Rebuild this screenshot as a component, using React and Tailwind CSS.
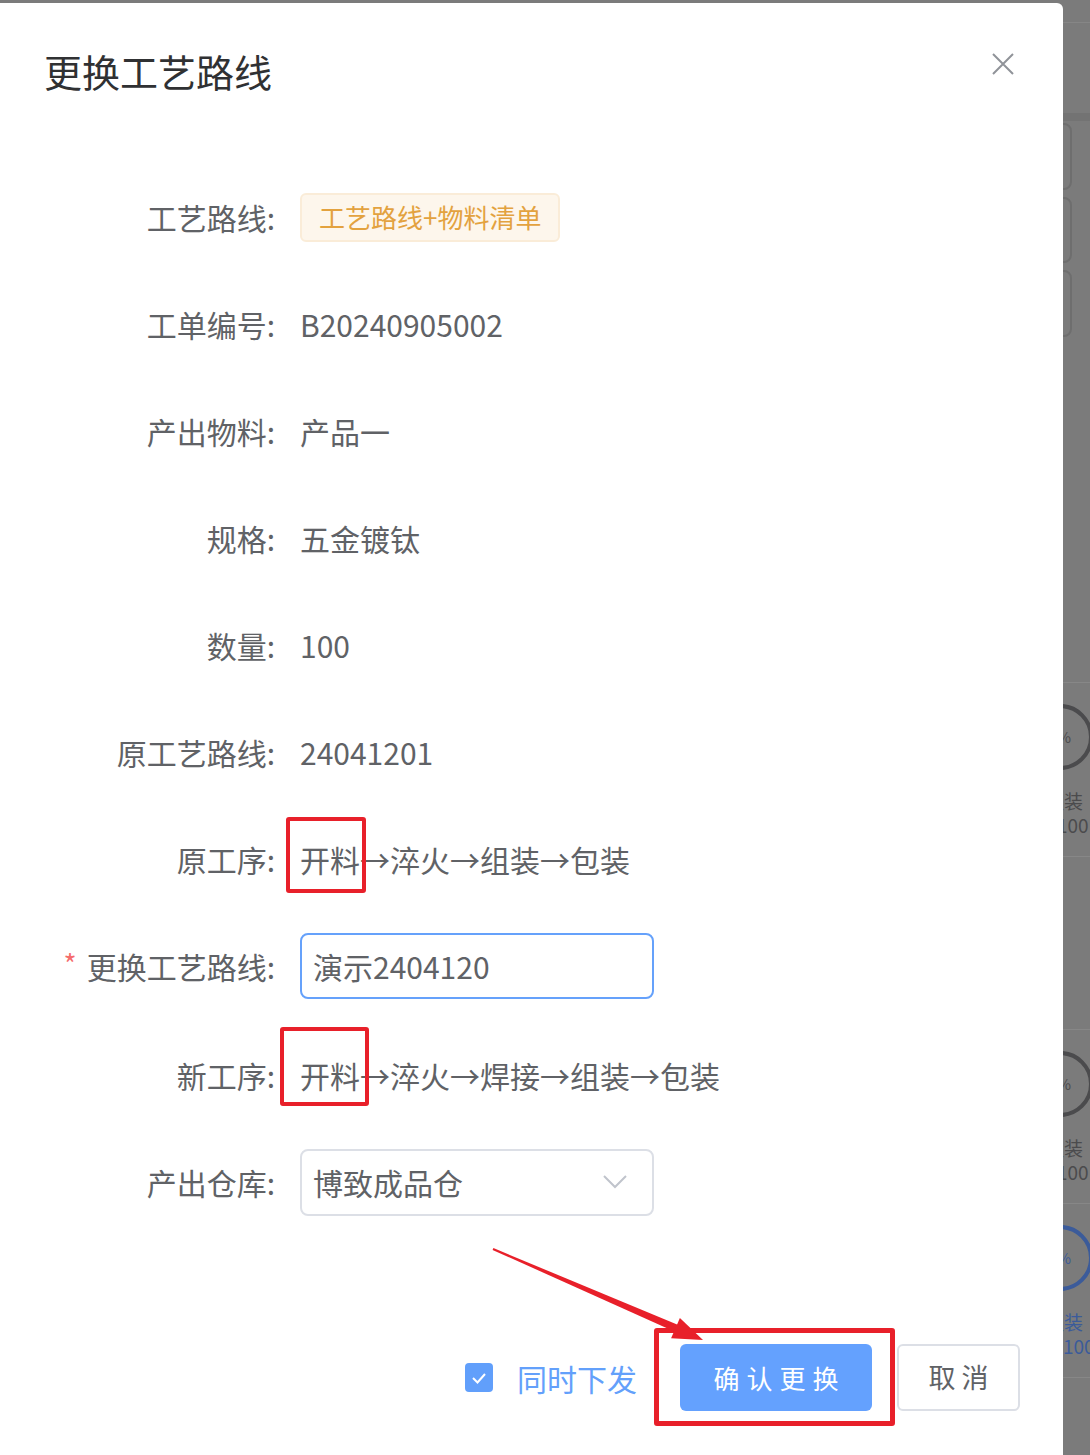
import React from "react";

const FONT = { fontFamily: '"Noto Sans CJK SC", "Noto Sans", sans-serif' };

function Row({ label, required, children }) {
  return (
    <div className="flex items-center h-[66px]">
      <div className="w-[275px] flex-none flex justify-end items-center text-[30px] leading-[42px] text-[#606266]">
        {required && <span className="text-[#f56c6c] text-[28px] mr-[10px] mt-[-6px]">*</span>}
        <span>{label}:</span>
      </div>
      <div className="ml-[25px] flex items-center text-[30px] leading-[42px] text-[#606266]">{children}</div>
    </div>
  );
}

function StripItem({ blue, firstLine = true }) {
  const ring = blue ? "border-[#3b5b9a]" : "border-[#4b4b4d]";
  const txt = blue ? "text-[#3b5b9a]" : "text-[#4b4b4d]";
  return (
    <div className="flex flex-col">
      {firstLine ? <div className="h-px bg-[#878787]" /> : <div className="h-px" />}
      <div className="h-[21px]" />
      <div className={`w-[66px] h-[66px] rounded-full border-[4px] ${ring} -ml-[36px] flex items-center justify-center text-[15px] ${txt}`}>
        0%
      </div>
      <div className={`mt-[19px] h-[23px] leading-[23px] text-[19px] ${txt} -ml-[18px] whitespace-nowrap`}>组装</div>
      <div className={`mt-[1px] h-[23px] leading-[23px] text-[19px] ${txt} ${blue ? "ml-[0px]" : "-ml-[6px]"} whitespace-nowrap`}>100</div>
    </div>
  );
}

export default function App() {
  return (
    <div className="w-[1090px] h-[1455px] bg-[#7b7b7b] flex overflow-hidden font-normal" style={FONT}>
      {/* Modal */}
      <div className="w-[1063px] flex-none mt-[3px] h-[1452px] bg-white rounded-tr-[6px] relative flex flex-col">
        {/* Header */}
        <div className="flex justify-between items-start pl-[44px] pr-[49px] pt-[45px]">
          <div className="text-[38px] leading-[46px] text-[#303133]">更换工艺路线</div>
          <svg width="22" height="22" viewBox="0 0 22 22" className="mt-[5px]">
            <path d="M1 1 L21 21 M21 1 L1 21" stroke="#909399" strokeWidth="2" fill="none" />
          </svg>
        </div>

        {/* Form */}
        <div className="mt-[90px] flex flex-col gap-[41px]">
          <Row label="工艺路线">
            <span className="h-[49px] px-[17px] flex items-center rounded-[6px] border-2 border-[#faecd8] bg-[#fdf6ec] text-[26px] text-[#e3a23f]">
              工艺路线+物料清单
            </span>
          </Row>
          <Row label="工单编号">B20240905002</Row>
          <Row label="产出物料">产品一</Row>
          <Row label="规格">五金镀钛</Row>
          <Row label="数量">100</Row>
          <Row label="原工艺路线">24041201</Row>
          <Row label="原工序">
            <span className="relative">
              开料
              <span className="absolute left-[-14px] top-[-21px] w-[80px] h-[76px] border-[4px] border-[#e8202a] rounded-[3px]" />
            </span>
            <span>→淬火→组装→包装</span>
          </Row>
          <Row label="更换工艺路线" required>
            <div className="w-[354px] h-[66px] border-2 border-[#65a1fb] rounded-[8px] flex items-center px-[11px] text-[#606266]">
              演示2404120
            </div>
          </Row>
          <div className="mt-[2px]">
            <Row label="新工序">
              <span className="relative">
                开料
                <span className="absolute left-[-20px] top-[-27px] w-[89px] h-[79px] border-[4px] border-[#e8202a] rounded-[3px]" />
              </span>
              <span>→淬火→焊接→组装→包装</span>
            </Row>
          </div>
          <Row label="产出仓库">
            <div className="w-[354px] h-[67px] border-2 border-[#dcdfe6] rounded-[8px] flex items-center justify-between pl-[11px] pr-[25px] text-[#606266]">
              <span>博致成品仓</span>
              <svg width="24" height="14" viewBox="0 0 24 14">
                <polyline points="1,1 12,12 23,1" fill="none" stroke="#c0c4cc" strokeWidth="2" />
              </svg>
            </div>
          </Row>
        </div>

        {/* Footer */}
        <div className="mt-[129px] flex justify-end items-center pr-[43px]">
          <div className="w-[28px] h-[29px] rounded-[4px] bg-[#619ffb] flex items-center justify-center">
            <svg width="18" height="14" viewBox="0 0 18 14">
              <polyline points="3,7 7.5,11.5 15,3" fill="none" stroke="white" strokeWidth="2" />
            </svg>
          </div>
          <span className="ml-[24px] text-[30px] leading-[42px] text-[#63a0fb]">同时下发</span>
          <div className="ml-[43px] relative">
            <div className="w-[192px] h-[67px] rounded-[6px] bg-[#64a1fe] text-white text-[26px] flex items-center justify-center tracking-[7px] pl-[7px]">
              确认更换
            </div>
            <span className="absolute left-[-26px] top-[-16px] w-[241px] h-[98px] border-[5px] border-[#e8202a] rounded-[3px]" />
          </div>
          <div className="ml-[25px] w-[123px] h-[67px] rounded-[6px] border-2 border-[#dcdfe6] text-[#606266] text-[27px] flex items-center justify-center tracking-[6px] pl-[6px]">
            取消
          </div>
        </div>

        {/* Red arrow annotation */}
        <svg className="absolute left-0 top-[-3px] pointer-events-none" width="1063" height="1455" viewBox="0 0 1063 1455">
          <polygon points="492.6,1249.9 493.4,1248.1 679.5,1325.6 676.5,1332.4" fill="#e8202a" />
          <polygon points="703,1340 679.9,1318 671.1,1338.2" fill="#e8202a" />
        </svg>
      </div>

      {/* Underlying page strip */}
      <div className="w-[27px] flex-none overflow-hidden flex flex-col">
        <div className="h-[22px]" />
        <div className="h-px bg-[#868686]" />
        <div className="h-[90px]" />
        <div className="h-[8px] bg-[#737373]" />
        <div className="h-[2px]" />
        <div className="h-[67px] w-[40px] -ml-[31px] rounded-[8px] border-2 border-[#6e6e6e]" />
        <div className="h-[7px]" />
        <div className="h-[66px] w-[40px] -ml-[31px] rounded-[8px] border-2 border-[#6e6e6e]" />
        <div className="h-[7px]" />
        <div className="h-[67px] w-[40px] -ml-[31px] rounded-[8px] border-2 border-[#6e6e6e]" />
        <div className="h-[345px]" />
        <StripItem />
        <div className="h-[20px]" />
        <div className="h-px bg-[#878787]" />
        <div className="h-[172px]" />
        <StripItem />
        <div className="h-[20px]" />
        <StripItem blue />
        <div className="h-[20px]" />
        <div className="h-px bg-[#878787]" />
      </div>
    </div>
  );
}
